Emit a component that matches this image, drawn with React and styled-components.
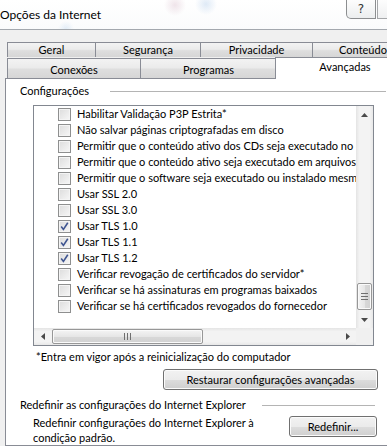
import React from 'react';
import styled, { createGlobalStyle } from 'styled-components';

const GlobalStyle = createGlobalStyle`
  html, body {
    margin: 0;
    padding: 0;
    background: #f0f0f0;
    overflow: hidden;
  }
  body {
    font-family: Lato, "Liberation Sans", sans-serif;
    font-size: 11px;
    color: #000;
  }
`;

const settings = [
  { label: 'Habilitar Validação P3P Estrita*', checked: false },
  { label: 'Não salvar páginas criptografadas em disco', checked: false },
  { label: 'Permitir que o conteúdo ativo dos CDs seja executado no computador*', checked: false },
  { label: 'Permitir que o conteúdo ativo seja executado em arquivos do Meu Computador*', checked: false },
  { label: 'Permitir que o software seja executado ou instalado mesmo que a assinatura seja inválida', checked: false },
  { label: 'Usar SSL 2.0', checked: false },
  { label: 'Usar SSL 3.0', checked: false },
  { label: 'Usar TLS 1.0', checked: true },
  { label: 'Usar TLS 1.1', checked: true },
  { label: 'Usar TLS 1.2', checked: true },
  { label: 'Verificar revogação de certificados do servidor*', checked: false },
  { label: 'Verificar se há assinaturas em programas baixados', checked: false },
  { label: 'Verificar se há certificados revogados do fornecedor', checked: false },
];

const topTabs = [
  { label: 'Geral', width: 89 },
  { label: 'Segurança', width: 106 },
  { label: 'Privacidade', width: 113 },
  { label: 'Conteúdo', width: 102 },
];

const bottomTabs = [
  { label: 'Conexões', width: 134 },
  { label: 'Programas', width: 137 },
  { label: 'Avançadas', width: 140, selected: true },
];

const Arrow = ({ dir }) => {
  const pts = {
    up: '0,4 3.5,0 7,4',
    down: '0,0 3.5,4 7,0',
    left: '4,0 0,3.5 4,7',
    right: '0,0 4,3.5 0,7',
  }[dir];
  const vertical = dir === 'up' || dir === 'down';
  return (
    <svg width={vertical ? 7 : 4} height={vertical ? 4 : 7} viewBox={vertical ? '0 0 7 4' : '0 0 4 7'}>
      <polygon points={pts} fill="#4a4a4a" />
    </svg>
  );
};

const App = () => {
  return (
    <Window>
      <GlobalStyle />
      <TitleBar>
        <Title>Opções da Internet</Title>
        <CaptionButtons>
          <HelpButton>?</HelpButton>
          <CloseStub />
        </CaptionButtons>
      </TitleBar>
      <Body>
        <TabRow>
          {topTabs.map((t) => (
            <Tab key={t.label} $width={t.width}>{t.label}</Tab>
          ))}
        </TabRow>
        <TabRow>
          {bottomTabs.map((t) =>
            t.selected ? (
              <SelectedTab key={t.label} $width={t.width}>{t.label}</SelectedTab>
            ) : (
              <Tab key={t.label} $width={t.width} $tall>{t.label}</Tab>
            )
          )}
        </TabRow>
        <Panel>
          <GroupHeader $width={366}>
            <GroupLabel $width={90}>Configurações</GroupLabel>
            <GroupRule />
          </GroupHeader>
          <ListBox>
            <ItemList>
              {settings.map((s) => (
                <Item key={s.label}>
                  <CheckBox>
                    {s.checked && (
                      <svg width="9" height="9" viewBox="0 0 9 9">
                        <path d="M1.2 4.6 L3.4 7.4 L7.8 0.8" fill="none" stroke="#3f5590" strokeWidth="1.6" />
                      </svg>
                    )}
                  </CheckBox>
                  <ItemText>{s.label}</ItemText>
                </Item>
              ))}
            </ItemList>
            <VScroll>
              <ArrowButton><Arrow dir="up" /></ArrowButton>
              <VTrack>
                <VThumb>
                  <Grip $vertical={false} />
                </VThumb>
              </VTrack>
              <ArrowButton><Arrow dir="down" /></ArrowButton>
            </VScroll>
            <HScroll>
              <ArrowButton><Arrow dir="left" /></ArrowButton>
              <HTrack>
                <HThumb>
                  <Grip $vertical />
                </HThumb>
              </HTrack>
              <ArrowButton><Arrow dir="right" /></ArrowButton>
            </HScroll>
            <Corner />
          </ListBox>
          <Footnote>*Entra em vigor após a reinicialização do computador</Footnote>
          <PushButton $width={215} $left={143} $top={5}>Restaurar configurações avançadas</PushButton>
          <GroupHeader $width={355} $top={7}>
            <GroupLabel $width={242}>Redefinir as configurações do Internet Explorer</GroupLabel>
            <GroupRule />
          </GroupHeader>
          <ResetRow>
            <ResetText>
              Redefinir configurações do Internet Explorer à
              <br />
              condição padrão.
            </ResetText>
            <PushButton $width={88} $left={0} $top={1}>Redefinir...</PushButton>
          </ResetRow>
        </Panel>
      </Body>
    </Window>
  );
};

const Window = styled.div`
  width: 387px;
  height: 446px;
  overflow: hidden;
  display: flex;
  flex-direction: column;
  background: #f0f0f0;
`;

const TitleBar = styled.div`
  flex: none;
  height: 29px;
  display: flex;
  align-items: flex-start;
  border-bottom: 1px solid #a3a8ae;
  background:
    radial-gradient(circle at 175px 5px, rgba(200, 160, 180, 0.28), rgba(255, 255, 255, 0) 11px),
    radial-gradient(circle at 206px 4px, rgba(140, 180, 225, 0.28), rgba(255, 255, 255, 0) 11px),
    radial-gradient(circle at 66px 29px, rgba(140, 185, 230, 0.22), rgba(255, 255, 255, 0) 8px),
    linear-gradient(#ffffff, #fafbfc);
`;

const Title = styled.div`
  flex: 1;
  padding-top: 7px;
  font-size: 12px;
  line-height: 16px;
  color: #000;
`;

const CaptionButtons = styled.div`
  display: flex;
  align-items: flex-start;
`;

const HelpButton = styled.div`
  width: 28px;
  height: 18px;
  border: 1px solid #8c8e90;
  border-top: none;
  border-bottom-left-radius: 5px;
  background: linear-gradient(#fdfdfd, #eceeef);
  display: flex;
  align-items: center;
  justify-content: center;
  font-family: "DejaVu Sans", sans-serif;
  font-size: 12px;
  color: #333;
`;

const CloseStub = styled.div`
  width: 9px;
  height: 18px;
  margin-left: 1px;
  border-left: 1px solid #a5a7a9;
  border-bottom: 1px solid #a5a7a9;
  background: linear-gradient(#fdfdfd, #eff0f1);
`;

const Body = styled.div`
  flex: 1;
  width: 415px;
  padding-top: 12px;
  display: flex;
  flex-direction: column;
`;

const TabRow = styled.div`
  display: flex;
  align-items: flex-end;
  margin-left: 7px;
`;

const Tab = styled.div`
  flex: none;
  box-sizing: border-box;
  width: ${(p) => p.$width}px;
  height: ${(p) => (p.$tall ? 20 : 15)}px;
  margin-left: -1px;
  &:first-child {
    margin-left: 0;
  }
  border: 1px solid #898c95;
  border-bottom: none;
  background: linear-gradient(#f3f3f3, #ebebeb 45%, #dedede 55%, #d6d6d6);
  display: flex;
  align-items: center;
  justify-content: center;
  padding-top: ${(p) => (p.$tall ? 2 : 0)}px;
  line-height: 14px;
`;

const SelectedTab = styled.div`
  flex: none;
  position: relative;
  z-index: 1;
  box-sizing: border-box;
  width: ${(p) => p.$width}px;
  height: 22px;
  margin-left: -2px;
  margin-bottom: -1px;
  border: 1px solid #898c95;
  border-bottom: none;
  background: #fff;
  display: flex;
  justify-content: center;
  padding-top: 2px;
  line-height: 14px;
`;

const Panel = styled.div`
  flex: 1;
  margin-left: 5px;
  border: 1px solid #898c95;
  background: #fff;
  padding: 4px 0 0 14px;
  display: flex;
  flex-direction: column;
  align-items: flex-start;
`;

const GroupHeader = styled.div`
  display: flex;
  align-items: center;
  width: ${(p) => p.$width}px;
  height: 15px;
  margin-top: ${(p) => p.$top || 0}px;
`;

const GroupLabel = styled.span`
  flex: none;
  width: ${(p) => p.$width}px;
  line-height: 15px;
  white-space: nowrap;
`;

const GroupRule = styled.div`
  flex: 1;
  border-top: 1px solid #b4b4b4;
  margin-top: 1px;
`;

const ListBox = styled.div`
  margin: 7px 0 0 13px;
  width: 341px;
  height: 241px;
  box-sizing: border-box;
  border: 1px solid #828790;
  display: grid;
  grid-template-columns: 1fr 17px;
  grid-template-rows: 1fr 17px;
`;

const ItemList = styled.div`
  overflow: hidden;
  padding-left: 24px;
  background: #fff;
`;

const Item = styled.div`
  height: 16px;
  display: flex;
  align-items: center;
  white-space: nowrap;
`;

const CheckBox = styled.span`
  flex: none;
  width: 13px;
  height: 13px;
  box-sizing: border-box;
  border: 1px solid #8e8f8f;
  margin-right: 6px;
  background: linear-gradient(135deg, #dcdcdc, #f7f7f7);
  box-shadow: inset 0 0 0 1px #f4f4f4;
  display: flex;
  align-items: center;
  justify-content: center;
`;

const ItemText = styled.span`
  line-height: 16px;
`;

const VScroll = styled.div`
  display: flex;
  flex-direction: column;
  background: linear-gradient(90deg, #e4e4e4, #f3f3f3 20%, #f3f3f3 80%, #e8e8e8);
`;

const HScroll = styled.div`
  display: flex;
  background: linear-gradient(#e4e4e4, #f3f3f3 20%, #f3f3f3 80%, #e8e8e8);
`;

const ArrowButton = styled.div`
  flex: none;
  width: 17px;
  height: 17px;
  display: flex;
  align-items: center;
  justify-content: center;
`;

const VTrack = styled.div`
  flex: 1;
  display: flex;
  flex-direction: column;
  justify-content: flex-end;
  align-items: center;
  padding-bottom: 1px;
`;

const HTrack = styled.div`
  flex: 1;
  display: flex;
  align-items: center;
  padding-left: 1px;
`;

const thumbBase = `
  box-sizing: border-box;
  border: 1px solid #979797;
  border-radius: 2px;
  display: flex;
  align-items: center;
  justify-content: center;
  box-shadow: inset 0 0 0 1px #fafafa;
`;

const VThumb = styled.div`
  ${thumbBase}
  width: 15px;
  height: 27px;
  background: linear-gradient(90deg, #f4f4f4, #e6e6e6 50%, #d8d8d8 51%, #d2d2d2);
`;

const HThumb = styled.div`
  ${thumbBase}
  width: 151px;
  height: 15px;
  background: linear-gradient(#f4f4f4, #e6e6e6 50%, #d8d8d8 51%, #d2d2d2);
`;

const Grip = styled.div`
  width: 7px;
  height: 7px;
  background: ${(p) =>
    p.$vertical
      ? 'repeating-linear-gradient(90deg, #6f6f6f 0 1px, transparent 1px 3px)'
      : 'repeating-linear-gradient(#6f6f6f 0 1px, transparent 1px 3px)'};
`;

const Corner = styled.div`
  background: #f0f0f0;
`;

const Footnote = styled.div`
  margin: 3px 0 0 16px;
  line-height: 15px;
  white-space: nowrap;
`;

const PushButton = styled.div`
  box-sizing: border-box;
  width: ${(p) => p.$width}px;
  height: 21px;
  margin-top: ${(p) => p.$top}px;
  margin-left: ${(p) => p.$left}px;
  border: 1px solid #707070;
  border-radius: 3px;
  background: linear-gradient(#f2f2f2, #ebebeb 50%, #dddddd 51%, #cfcfcf);
  box-shadow: inset 0 0 0 1px #fbfbfb;
  display: flex;
  align-items: center;
  justify-content: center;
  white-space: nowrap;
  flex: none;
`;

const ResetRow = styled.div`
  display: flex;
  align-items: flex-start;
  margin: 3px 0 0 13px;
`;

const ResetText = styled.div`
  width: 256px;
  line-height: 15px;
  white-space: nowrap;
`;

export default App;
